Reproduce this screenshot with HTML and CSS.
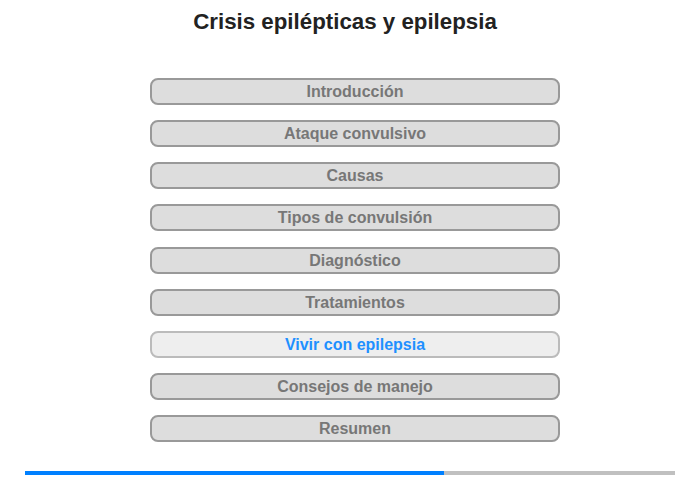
FILE: index.html
```html
<!DOCTYPE html>
<html lang="es">
<head>
<meta charset="utf-8">
<title>Crisis epilépticas y epilepsia</title>
<link rel="stylesheet" href="styles.css">
</head>
<body>
<div class="page">
  <h1 class="title">Crisis epilépticas y epilepsia</h1>
  <nav class="menu">
    <div class="item">Introducción</div>
    <div class="item">Ataque convulsivo</div>
    <div class="item">Causas</div>
    <div class="item">Tipos de convulsión</div>
    <div class="item">Diagnóstico</div>
    <div class="item">Tratamientos</div>
    <div class="item active">Vivir con epilepsia</div>
    <div class="item">Consejos de manejo</div>
    <div class="item">Resumen</div>
  </nav>
  <div class="progress"><div class="progress-fill" style="width: 64.5%"></div></div>
</div>
</body>
</html>
```
FILE: styles.css
```css
html, body {
  margin: 0;
  padding: 0;
  background: #fff;
}
.page {
  width: 700px;
  height: 480px;
  font-family: "Liberation Sans", Arial, sans-serif;
  display: flex;
  flex-direction: column;
  align-items: center;
}
.title {
  margin: 9px 10px 0 0;
  font-size: 22.3px;
  line-height: 26px;
  font-weight: bold;
  color: #222;
  text-align: center;
}
.menu {
  margin: 43px 0 0 10px;
  display: flex;
  flex-direction: column;
  gap: 15.125px;
  width: 410px;
}
.item {
  box-sizing: border-box;
  height: 27px;
  border: 2px solid #999;
  border-radius: 8px;
  background: #ddd;
  color: #777;
  font-size: 16px;
  font-weight: bold;
  line-height: 23px;
  text-align: center;
}
.item.active {
  background: #eee;
  border-color: #bbb;
  color: #1e90ff;
}
.progress {
  margin-top: 29px;
  width: 650px;
  height: 4px;
  background: #c0c0c0;
}
.progress-fill {
  height: 100%;
  background: #0080ff;
}
```
